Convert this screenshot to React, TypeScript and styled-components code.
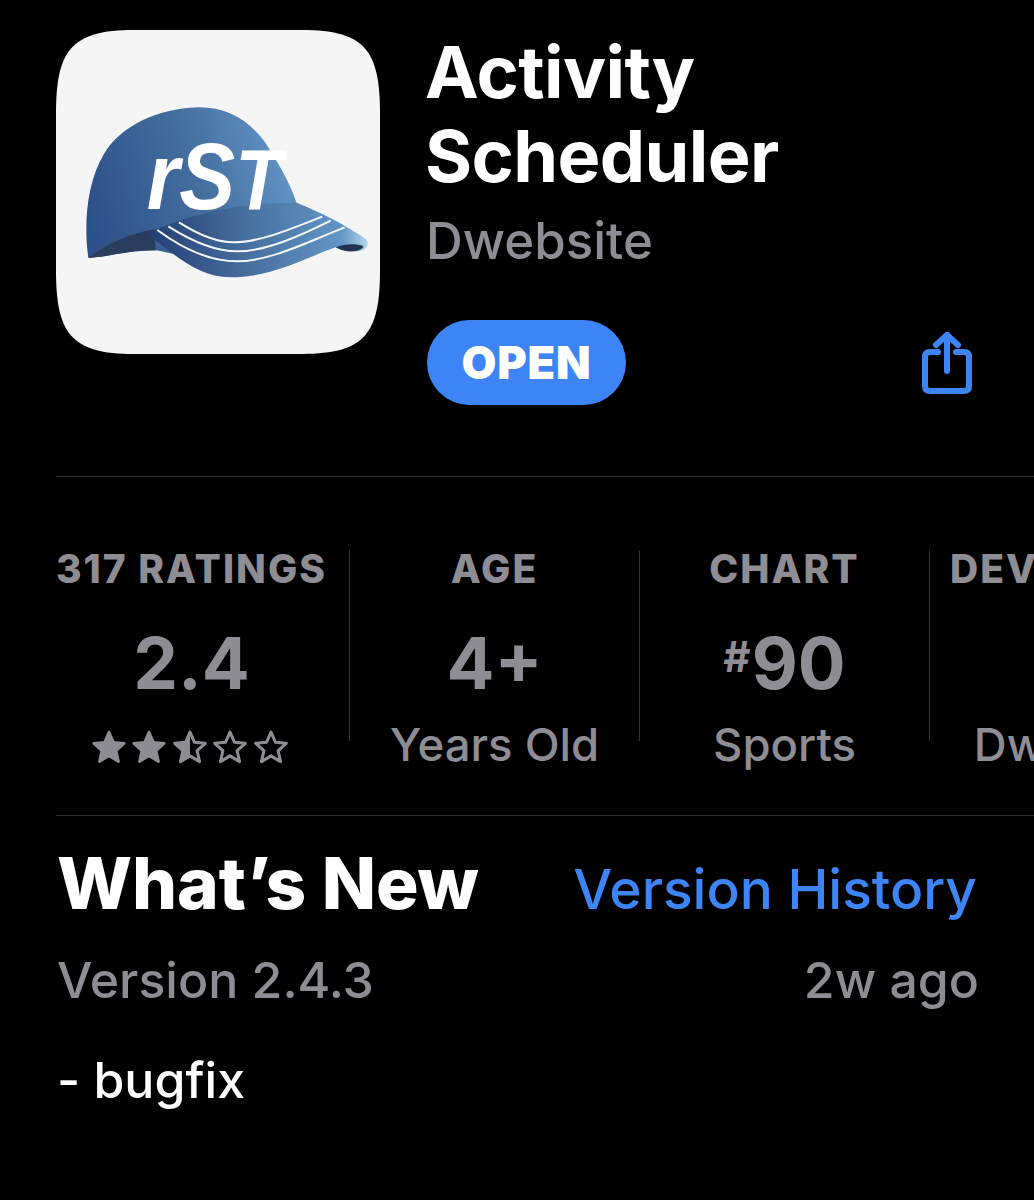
import React from "react";
import styled, { createGlobalStyle } from "styled-components";

const GlobalStyle = createGlobalStyle`
  html, body { margin: 0; padding: 0; background: #000; }
`;

const Page = styled.div`
  width: 1034px;
  height: 1200px;
  overflow: hidden;
  background: #000;
  font-family: Inter, "Liberation Sans", sans-serif;
  -webkit-font-smoothing: antialiased;
`;

const Header = styled.header`
  display: flex;
  gap: 46px;
  padding: 30px 0 0 56px;
  height: 476px;
  box-sizing: border-box;
`;

const AppIcon = styled.svg`
  width: 324px;
  height: 324px;
  flex: none;
`;

const Info = styled.div`
  flex: 1;
  display: flex;
  flex-direction: column;
  padding-right: 62px;
`;

const Title = styled.h1`
  margin: 0 0 0 -1px;
  color: #fff;
  font-size: 72px;
  line-height: 84px;
  font-weight: 700;
  letter-spacing: -0.6px;
`;

const Publisher = styled.div`
  color: #8d8d93;
  font-size: 51px;
  line-height: 58px;
  font-weight: 500;
  margin-top: 14px;
`;

const Actions = styled.div`
  display: flex;
  align-items: center;
  justify-content: space-between;
  margin-top: 50px;
`;

const OpenButton = styled.button`
  width: 199px;
  height: 85px;
  margin-left: 1px;
  border: 0;
  border-radius: 43px;
  background: #3d85f7;
  color: #fff;
  font-family: inherit;
  font-size: 45px;
  font-weight: 900;
  letter-spacing: 0.8px;
  padding: 0;
`;

const Divider = styled.hr`
  margin: 0 0 0 56px;
  border: 0;
  height: 1px;
  background: #2b2b2d;
`;

const Stats = styled.section`
  display: flex;
  height: 338px;
  box-sizing: border-box;
  padding: 73px 0 0 56px;
`;

const Stat = styled.div<{ $first?: boolean; $last?: boolean }>`
  flex: none;
  box-sizing: border-box;
  width: ${({ $first }) => ($first ? "294px" : "290px")};
  height: 191px;
  padding-right: ${({ $first }) => ($first ? "22px" : "0")};
  border-right: ${({ $last }) => ($last ? "0" : "1px solid #333336")};
  display: flex;
  flex-direction: column;
  align-items: center;
  color: #8d8d93;
  white-space: nowrap;
`;

const StatLabel = styled.div`
  flex: none;
  font-size: 39px;
  line-height: 38px;
  font-weight: 800;
  letter-spacing: 2px;
`;

const StatValue = styled.div`
  flex: none;
  font-size: 71px;
  line-height: 76px;
  height: 76px;
  font-weight: 700;
  margin-top: 37px;
`;

const Hash = styled.span`
  font-size: 42px;
  line-height: 0;
  vertical-align: 17px;
  font-weight: 700;
  margin-right: 1px;
`;

const StatSub = styled.div`
  flex: none;
  font-size: 45.5px;
  line-height: 52px;
  font-weight: 500;
  margin-top: 18px;
`;

const Stars = styled.div`
  flex: none;
  display: flex;
  gap: 4.5px;
  margin: 29px 4px 0 0;
`;

const StarIcon = styled.svg`
  width: 36px;
  height: 34px;
  display: block;
`;

const News = styled.section`
  padding: 28px 57px 0 57px;
`;

const NewsRow = styled.div`
  display: flex;
  justify-content: space-between;
  align-items: baseline;
`;

const MetaRow = styled(NewsRow)`
  margin-right: -2px;
`;

const NewsTitle = styled.h2`
  margin: 0;
  color: #fff;
  font-size: 71px;
  line-height: 78px;
  font-weight: 800;
  letter-spacing: -0.1px;
`;

const HistoryLink = styled.a`
  color: #3d85f7;
  font-size: 55px;
  font-weight: 500;
`;

const Meta = styled.div`
  color: #8d8d93;
  font-size: 50px;
  line-height: 58px;
  font-weight: 500;
  margin-top: 29px;
`;

const Notes = styled.p`
  margin: 42px 0 0;
  color: #fff;
  font-size: 50px;
  line-height: 58px;
  font-weight: 500;
`;

const STAR = "M50 6 L63 36 L95 39 L71 61 L78 93 L50 76 L22 93 L29 61 L5 39 L37 36 Z";

const Star = ({ kind }: { kind: "full" | "half" | "empty" }) => (
  <StarIcon viewBox="0 0 100 100">
    {kind === "half" && (
      <defs>
        <clipPath id="half-star">
          <rect x="0" y="0" width="50" height="100" />
        </clipPath>
      </defs>
    )}
    <path
      d={STAR}
      fill={kind === "full" ? "#8d8d93" : "none"}
      stroke="#8d8d93"
      strokeWidth={kind === "full" ? 8 : 9}
      strokeLinejoin="round"
    />
    {kind === "half" && <path d={STAR} fill="#8d8d93" clipPath="url(#half-star)" />}
  </StarIcon>
);

const CapIcon = () => (
  <AppIcon viewBox="46 28 972 972">
    <defs>
      <linearGradient id="crown" x1="140" y1="600" x2="760" y2="420" gradientUnits="userSpaceOnUse">
        <stop offset="0" stopColor="#2c5088" />
        <stop offset="0.55" stopColor="#456f9f" />
        <stop offset="1" stopColor="#6296c8" />
      </linearGradient>
      <linearGradient id="brim" x1="330" y1="680" x2="980" y2="650" gradientUnits="userSpaceOnUse">
        <stop offset="0" stopColor="#233f73" />
        <stop offset="0.45" stopColor="#47709f" />
        <stop offset="0.88" stopColor="#6296c6" />
        <stop offset="1" stopColor="#b4d6ea" />
      </linearGradient>
    </defs>
    <path
      d="M46 280 C46 90 90 28 280 28 H784 C974 28 1018 90 1018 280 V748 C1018 938 974 1000 784 1000 H280 C90 1000 46 938 46 748 Z"
      fill="#f5f5f6"
    />
    <path
      d="M143 712 C130 620 135 490 190 400 C240 315 350 265 470 260 C560 258 630 300 680 375 C720 440 750 490 768 548 L850 582 L400 700 L330 685 C270 690 200 708 143 712 Z"
      fill="url(#crown)"
    />
    <path d="M143 712 C200 665 270 640 340 625 L345 690 C280 688 200 708 143 712 Z" fill="#2b3d5e" />
    <path
      d="M320 640 C420 590 580 545 768 546 C840 575 920 615 975 655 C990 672 975 690 950 692 C920 695 900 685 885 680 C820 700 700 770 570 770 C470 770 400 700 320 640 Z"
      fill="url(#brim)"
    />
    <path d="M885 680 C910 670 945 668 968 676 C968 688 940 694 920 692 C905 690 895 685 885 680 Z" fill="#233452" />
    <g fill="none" stroke="#f5f7fa" strokeWidth="6">
      <path d="M415 605 C470 640 530 665 580 665 C660 665 760 620 845 588" />
      <path d="M383 617 C450 660 520 692 590 692 C680 692 790 640 870 600" />
      <path d="M350 628 C420 680 500 722 590 722 C690 722 810 660 912 620" />
    </g>
    <text
      x="318"
      y="564"
      fill="#fff"
      fontFamily="'Liberation Sans', Arial, sans-serif"
      fontWeight="700"
      fontStyle="italic"
      fontSize="285"
      textLength="405"
      lengthAdjust="spacingAndGlyphs"
    >
      rS<tspan fontSize="258">T</tspan>
    </text>
  </AppIcon>
);

const ShareGlyph = styled.svg`
  width: 50px;
  height: 62px;
  flex: none;
`;

const ShareIcon = () => (
  <ShareGlyph viewBox="0 0 50 62" fill="none" stroke="#3d85f7" strokeWidth="6" strokeLinecap="round" strokeLinejoin="round">
    <path d="M25 39 V3" />
    <path d="M14 13 L25 3 L36 13" />
    <path d="M16 20 H8 Q3 20 3 25 V54 Q3 59 8 59 H42 Q47 59 47 54 V25 Q47 20 42 20 H34" />
  </ShareGlyph>
);

export default function App() {
  return (
    <Page>
      <GlobalStyle />
      <Header>
        <CapIcon />
        <Info>
          <Title>
            Activity
            <br />
            Scheduler
          </Title>
          <Publisher>Dwebsite</Publisher>
          <Actions>
            <OpenButton>OPEN</OpenButton>
            <ShareIcon />
          </Actions>
        </Info>
      </Header>
      <Divider />
      <Stats>
        <Stat $first>
          <StatLabel>317 RATINGS</StatLabel>
          <StatValue>2.4</StatValue>
          <Stars>
            <Star kind="full" />
            <Star kind="full" />
            <Star kind="half" />
            <Star kind="empty" />
            <Star kind="empty" />
          </Stars>
        </Stat>
        <Stat>
          <StatLabel>AGE</StatLabel>
          <StatValue>4+</StatValue>
          <StatSub>Years Old</StatSub>
        </Stat>
        <Stat>
          <StatLabel>CHART</StatLabel>
          <StatValue>
            <Hash>#</Hash>90
          </StatValue>
          <StatSub>Sports</StatSub>
        </Stat>
        <Stat $last>
          <StatLabel>DEVELOPER</StatLabel>
          <StatValue />
          <StatSub>Dwebsite</StatSub>
        </Stat>
      </Stats>
      <Divider />
      <News>
        <NewsRow>
          <NewsTitle>What’s New</NewsTitle>
          <HistoryLink>Version History</HistoryLink>
        </NewsRow>
        <MetaRow>
          <Meta>Version 2.4.3</Meta>
          <Meta>2w ago</Meta>
        </MetaRow>
        <Notes>- bugfix</Notes>
      </News>
    </Page>
  );
}
